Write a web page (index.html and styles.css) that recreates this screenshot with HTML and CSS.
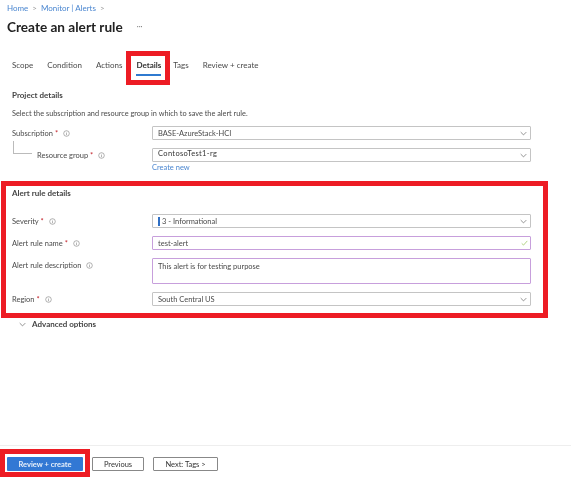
FILE: index.html
```html
<!DOCTYPE html>
<html lang="en">
<head>
    <meta charset="UTF-8">
    <title>Create an alert rule</title>
    <link rel="stylesheet" href="styles.css">
</head>
<body>
    <svg class="defs" width="0" height="0">
        <symbol id="info" viewBox="0 0 10 10">
            <circle cx="5" cy="5" r="4" fill="none" stroke="#777" stroke-width="0.8"/>
            <path d="M5 4.4V7.4M5 2.7V3.5" fill="none" stroke="#777" stroke-width="0.8"/>
        </symbol>
        <symbol id="chevron" viewBox="0 0 10 6">
            <path d="M1 1L5 5L9 1" fill="none" stroke="#666" stroke-width="1"/>
        </symbol>
    </svg>

    <nav class="breadcrumb">
        <a>Home</a><span class="sep">&gt;</span><a>Monitor | Alerts</a><span class="sep">&gt;</span>
    </nav>
    <header class="title-row">
        <h1>Create an alert rule</h1>
        <span class="more">···</span>
    </header>

    <div class="tabs">
        <span class="tab">Scope</span>
        <span class="tab">Condition</span>
        <span class="tab">Actions</span>
        <span class="tab tab-active"><span class="tab-label">Details</span></span>
        <span class="tab">Tags</span>
        <span class="tab">Review + create</span>
    </div>

    <section class="project">
        <h2>Project details</h2>
        <p class="intro">Select the subscription and resource group in which to save the alert rule.</p>
        <div class="row">
            <label>Subscription <b>*</b> <svg class="info"><use href="#info"/></svg></label>
            <div class="field">BASE-AzureStack-HCI<svg class="chev"><use href="#chevron"/></svg></div>
        </div>
        <div class="row row-child">
            <span class="tree"></span>
            <label>Resource group <b>*</b> <svg class="info"><use href="#info"/></svg></label>
            <div class="field field-contoso">ContosoTest1-rg<svg class="chev"><use href="#chevron"/></svg></div>
        </div>
        <a class="create-new">Create new</a>
    </section>

    <section class="alert-details">
        <h2>Alert rule details</h2>
        <div class="row row-severity">
            <label>Severity <b>*</b> <svg class="info"><use href="#info"/></svg></label>
            <div class="field"><span class="sev-bar"></span>3 - Informational<svg class="chev"><use href="#chevron"/></svg></div>
        </div>
        <div class="row">
            <label>Alert rule name <b>*</b> <svg class="info"><use href="#info"/></svg></label>
            <div class="field field-valid">test-alert
                <svg class="check" viewBox="0 0 10 8"><path d="M1 4.5L3.6 7L9 1" fill="none" stroke="#92c353" stroke-width="1"/></svg>
            </div>
        </div>
        <div class="row row-top">
            <label>Alert rule description <svg class="info"><use href="#info"/></svg></label>
            <div class="field field-valid field-area">This alert is for testing purpose</div>
        </div>
        <div class="row">
            <label>Region <b>*</b> <svg class="info"><use href="#info"/></svg></label>
            <div class="field">South Central US<svg class="chev"><use href="#chevron"/></svg></div>
        </div>
    </section>

    <div class="advanced"><svg class="chev-adv"><use href="#chevron"/></svg>Advanced options</div>

    <footer class="footer">
        <div class="primary-wrap"><button class="btn btn-primary">Review + create</button></div>
        <button class="btn">Previous</button>
        <button class="btn btn-next">Next: Tags &gt;</button>
    </footer>
</body>
</html>
```

FILE: styles.css
```css
* {
    box-sizing: border-box;
}

body {
    margin: 0;
    width: 571px;
    height: 477px;
    overflow: hidden;
    display: flex;
    flex-direction: column;
    background: #fff;
    color: #4a4a4a;
    font-family: "Lato", "Open Sans", sans-serif;
    font-size: 7.5px;
    line-height: 10px;
    filter: blur(0.25px);
}

.defs {
    position: absolute;
}

a {
    color: #4a86d0;
}

/* header */
.breadcrumb {
    height: 13px;
    padding: 3px 0 0 7px;
    display: flex;
    gap: 4px;
    font-size: 8px;
}

.sep {
    color: #999;
}

.title-row {
    height: 20px;
    margin-top: 4px;
    padding-left: 7px;
    display: flex;
    align-items: center;
}

h1 {
    margin: 0;
    font-size: 13.6px;
    font-weight: 700;
    color: #222;
}

.more {
    margin-left: 14px;
    color: #777;
}

/* tabs */
.tabs {
    height: 34px;
    margin-top: 14px;
    padding: 0 0 6px 12px;
    display: flex;
    align-items: center;
    gap: 14px;
    font-size: 8px;
}

.tab-active {
    align-self: flex-start;
    margin: 0 -11px 0 -10px;
    height: 34px;
    padding: 4px 4px 0 5px;
    border: 5px solid #ed1c24;
    font-weight: 700;
    color: #333;
}

.tab-label {
    display: block;
    height: 15px;
    border-bottom: 1px solid #2f7ad0;
    box-shadow: 0 1px 0 #2f7ad0;
}

/* sections */
h2 {
    margin: 0;
    font-size: 8px;
    font-weight: 700;
    color: #444;
}

.project {
    padding: 5px 0 0 12px;
}

.intro {
    margin: 9px 0 7px;
    font-size: 7.35px;
}

.row {
    width: 519px;
    margin-bottom: 8px;
    display: grid;
    grid-template-columns: 140px 379px;
    align-items: center;
}

.row label {
    padding-top: 1px;
}

.row-child {
    position: relative;
    margin-bottom: 0;
}

.row-child label {
    padding-left: 25px;
}

.row-top {
    align-items: start;
}

.row-top label {
    padding-top: 3px;
}

.tree {
    position: absolute;
    left: 1px;
    top: -7px;
    width: 19px;
    height: 13px;
    border-left: 1px solid #bbb;
    border-bottom: 1px solid #bbb;
}

label b {
    color: #c4262e;
    font-weight: 400;
}

.info {
    width: 7px;
    height: 7px;
    margin-left: 3px;
    vertical-align: -1px;
}

.field {
    position: relative;
    height: 14px;
    padding: 1px 5px 0;
    border: 1px solid #c4c4c4;
    border-radius: 1px;
    display: flex;
    align-items: center;
}

.field-contoso {
    color: #333;
    letter-spacing: 0.35px;
    padding-top: 0;
    padding-bottom: 2px;
}

.field-valid {
    border-color: #c79fdc;
}

.field-area {
    height: 26px;
    align-items: flex-start;
    padding-top: 3px;
}

.chev {
    position: absolute;
    right: 3px;
    top: 4px;
    width: 7px;
    height: 5px;
}

.check {
    position: absolute;
    right: 2px;
    top: 3px;
    width: 7px;
    height: 6px;
}

.sev-bar {
    width: 2px;
    height: 9px;
    margin-right: 2px;
    background: #2f6fc4;
}

.create-new {
    display: block;
    margin: 1px 0 0 140px;
}

.alert-details {
    width: 547px;
    height: 137px;
    margin: 8px 0 0 1px;
    padding: 2px 0 0 6px;
    border: 5px solid #ed1c24;
}

.row-severity {
    margin-top: 16px;
}

.advanced {
    margin: 1px 0 0 19px;
    display: flex;
    align-items: center;
    font-size: 8px;
    font-weight: 700;
    color: #444;
}

.chev-adv {
    width: 7px;
    height: 5px;
    margin-right: 6px;
}

/* footer */
.footer {
    margin-top: auto;
    height: 32px;
    border-top: 1px solid #eee;
    padding-top: 3px;
    display: flex;
    align-items: flex-start;
    gap: 9px;
}

.primary-wrap {
    width: 90px;
    height: 28px;
    margin-right: -7px;
    padding: 3px 0 0 2px;
    border: 5px solid #ed1c24;
}

.btn {
    width: 52px;
    height: 14px;
    margin-top: 8px;
    padding: 1px 0 0;
    border: 1px solid #888;
    border-radius: 1px;
    background: #fff;
    color: #333;
    font-family: inherit;
    font-size: 7.5px;
    line-height: 10px;
}

.btn-primary {
    width: 76px;
    margin: 0;
    border: none;
    background: #3278d4;
    color: #e8f0fa;
    font-weight: 700;
}

.btn-next {
    width: 65px;
}
```
